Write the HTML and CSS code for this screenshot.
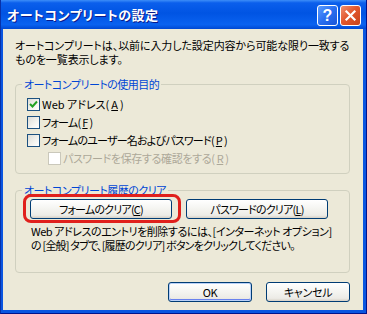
FILE: index.html
```html
<!DOCTYPE html>
<html lang="ja">
<head>
    <meta charset="UTF-8">
    <title>オートコンプリートの設定</title>
    <link rel="stylesheet" href="styles.css">
</head>
<body>
    <div class="window">
        <div class="titlebar">
            <span class="title">オートコンプリートの設定</span>
            <div class="title-buttons">
                <button class="tb-btn tb-help">?</button>
                <button class="tb-btn tb-close">
                    <svg width="13" height="13" viewBox="0 0 13 13"><path d="M2.5 2.5 L10.5 10.5 M10.5 2.5 L2.5 10.5" stroke="#fff" stroke-width="2.2" stroke-linecap="square"/></svg>
                </button>
            </div>
        </div>

        <div class="client">
            <p class="intro">オートコンプリートは、以前に入力した設定内容から可能な限り一致する<br>ものを一覧表示します。</p>

            <fieldset class="group group-use">
                <legend>オートコンプリートの使用目的</legend>
                <div class="group-body">
                    <label class="check check-web">
                        <span class="box"><svg width="9" height="9" viewBox="0 0 9 9"><path d="M1 4 L3.5 6.5 L8 1.5" fill="none" stroke="#21a121" stroke-width="2"/></svg></span>
                        Web アドレス(<u>A</u>)
                    </label>
                    <label class="check">
                        <span class="box"></span>
                        フォーム(<u>F</u>)
                    </label>
                    <label class="check">
                        <span class="box"></span>
                        フォームのユーザー名およびパスワード(<u>P</u>)
                    </label>
                    <label class="check sub disabled">
                        <span class="box"></span>
                        パスワードを保存する確認をする(<u>R</u>)
                    </label>
                </div>
            </fieldset>

            <fieldset class="group group-clear">
                <legend>オートコンプリート履歴のクリア</legend>
                <div class="group-body">
                    <div class="clear-row">
                        <button class="btn btn-clear marked">フォームのクリア(<u>C</u>)</button>
                        <button class="btn btn-clear">パスワードのクリア(<u>L</u>)</button>
                    </div>
                    <p class="note">
                        <span class="note-line note-first">Web アドレスのエントリを削除するには、[インターネット オプション]</span>
                        <span class="note-line">の [全般] タブで、[履歴のクリア] ボタンをクリックしてください。</span>
                    </p>
                </div>
            </fieldset>

            <div class="actions">
                <button class="btn btn-action btn-default">OK</button>
                <button class="btn btn-action">キャンセル</button>
            </div>
        </div>
    </div>
</body>
</html>
```

FILE: styles.css
```css
body {
    margin: 0;
    font-family: "Noto Sans CJK JP", sans-serif;
    font-size: 11px;
    font-feature-settings: "palt";
    letter-spacing: -0.8px;
    white-space: nowrap;
    color: #000;
}

/* ウィンドウ枠 */
.window {
    width: 367px;
    height: 314px;
    box-sizing: border-box;
    display: flex;
    flex-direction: column;
    background: #0a55e0;
    border-left: 1px solid #0831a8;
    border-right: 1px solid #00138c;
    border-bottom: 1px solid #00138c;
}

.titlebar {
    height: 29px;
    flex-shrink: 0;
    display: flex;
    align-items: center;
    justify-content: space-between;
    padding: 0 5px 0 6px;
    background: linear-gradient(180deg, #3d8ef8 0%, #0b5fec 10%, #0054e3 45%, #0a62f0 85%, #0048d2 100%);
}

.title {
    color: #fff;
    font-weight: bold;
    font-size: 13px;
    letter-spacing: 0.5px;
    text-shadow: 1px 1px 0 #0a1a8c;
}

.title-buttons {
    display: flex;
    gap: 2px;
    margin-top: 2px;
}

.tb-btn {
    width: 21px;
    height: 21px;
    padding: 0;
    border: 1px solid #fff;
    border-radius: 3px;
    display: flex;
    align-items: center;
    justify-content: center;
    color: #fff;
}

.tb-help {
    background: linear-gradient(135deg, #5a9cff 0%, #2a6ff0 50%, #1a55d8 100%);
    font-family: "Liberation Sans", sans-serif;
    font-weight: bold;
    font-size: 16px;
    letter-spacing: 0;
}

.tb-close {
    background: linear-gradient(135deg, #f09070 0%, #e2582e 45%, #c8431a 100%);
}

/* クライアント領域 */
.client {
    flex: 1;
    margin: 0 3px 3px 2px;
    background: #ece9d8;
    display: flex;
    flex-direction: column;
    padding: 0 13px 0 12px;
}

.intro {
    margin: 9px 0 0;
    line-height: 14px;
    letter-spacing: -0.1px;
}

.group {
    margin: 11px 0 0;
    padding: 0;
    border: 1px solid #d0d0bf;
    border-radius: 4px;
    min-inline-size: 0;
}

.group legend {
    margin-left: 6px;
    padding: 0 2px;
    color: #0046d5;
    line-height: 14px;
    letter-spacing: -0.5px;
}

.group-use .group-body {
    padding: 4px 0 6px 11px;
}

.check {
    display: flex;
    align-items: center;
    height: 18px;
    gap: 2px;
}

.check-web {
    letter-spacing: 0;
}

.check.sub {
    margin-left: 21px;
    letter-spacing: -0.35px;
}

.check.disabled {
    color: #aca899;
}

.box {
    width: 11px;
    height: 11px;
    border: 1px solid #1c5180;
    background: linear-gradient(135deg, #dcdcd7 0%, #f4f4f0 60%, #ffffff 100%);
    display: flex;
    align-items: center;
    justify-content: center;
    flex-shrink: 0;
}

.check.disabled .box {
    border-color: #cac8bb;
    background: #fff;
}

.group-clear {
    margin-top: 9px;
}

.group-clear .group-body {
    padding: 2px 0 20px 14px;
}

.clear-row {
    display: flex;
    gap: 14px;
}

.btn {
    font-family: inherit;
    font-size: 11px;
    font-feature-settings: "palt";
    letter-spacing: inherit;
    color: #000;
    height: 20px;
    padding: 0;
    border: 1px solid #003c74;
    border-radius: 3px;
    background: linear-gradient(180deg, #ffffff 0%, #f4f4f0 50%, #ecebe6 85%, #d6d0c5 100%);
    line-height: 18px;
}

.btn-clear {
    width: 142px;
}

/* 赤い囲み */
.marked {
    position: relative;
}

.marked::after {
    content: "";
    position: absolute;
    top: -6px;
    bottom: -5px;
    left: -8px;
    right: -10px;
    border: 3px solid #e0201c;
    border-radius: 8px;
}

.note {
    margin: 5px 0 0 1px;
    line-height: 14px;
}

.note-line {
    display: block;
}

.note-first {
    letter-spacing: -0.45px;
}

.actions {
    display: flex;
    justify-content: flex-end;
    gap: 14px;
    margin-top: 9px;
}

.btn-action {
    width: 84px;
    letter-spacing: -0.3px;
}

.btn-default {
    box-shadow: inset 0 0 0 1px #b9d1f8, inset 0 -1px 0 1px #6982ee;
}
```
